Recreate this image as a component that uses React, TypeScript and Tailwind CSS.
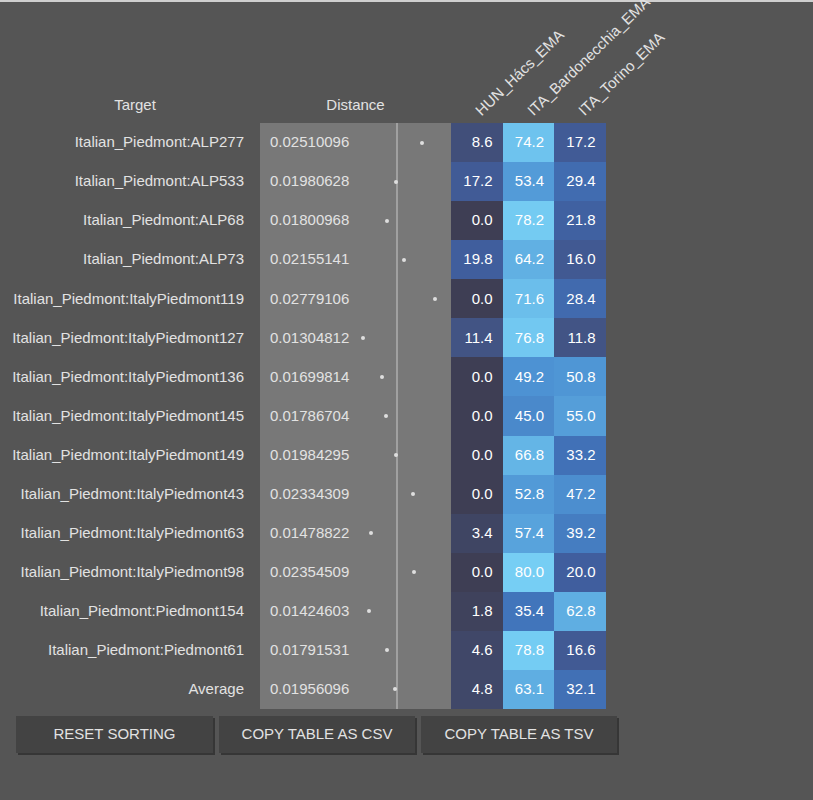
import React from "react";

type Row = { target: string; distance: number; values: [number, number, number] };

const ROWS: Row[] = [
  { target: "Italian_Piedmont:ALP277", distance: 0.02510096, values: [8.6, 74.2, 17.2] },
  { target: "Italian_Piedmont:ALP533", distance: 0.01980628, values: [17.2, 53.4, 29.4] },
  { target: "Italian_Piedmont:ALP68", distance: 0.01800968, values: [0.0, 78.2, 21.8] },
  { target: "Italian_Piedmont:ALP73", distance: 0.02155141, values: [19.8, 64.2, 16.0] },
  { target: "Italian_Piedmont:ItalyPiedmont119", distance: 0.02779106, values: [0.0, 71.6, 28.4] },
  { target: "Italian_Piedmont:ItalyPiedmont127", distance: 0.01304812, values: [11.4, 76.8, 11.8] },
  { target: "Italian_Piedmont:ItalyPiedmont136", distance: 0.01699814, values: [0.0, 49.2, 50.8] },
  { target: "Italian_Piedmont:ItalyPiedmont145", distance: 0.01786704, values: [0.0, 45.0, 55.0] },
  { target: "Italian_Piedmont:ItalyPiedmont149", distance: 0.01984295, values: [0.0, 66.8, 33.2] },
  { target: "Italian_Piedmont:ItalyPiedmont43", distance: 0.02334309, values: [0.0, 52.8, 47.2] },
  { target: "Italian_Piedmont:ItalyPiedmont63", distance: 0.01478822, values: [3.4, 57.4, 39.2] },
  { target: "Italian_Piedmont:ItalyPiedmont98", distance: 0.02354509, values: [0.0, 80.0, 20.0] },
  { target: "Italian_Piedmont:Piedmont154", distance: 0.01424603, values: [1.8, 35.4, 62.8] },
  { target: "Italian_Piedmont:Piedmont61", distance: 0.01791531, values: [4.6, 78.8, 16.6] },
  { target: "Average", distance: 0.01956096, values: [4.8, 63.1, 32.1] },
];

const SOURCES = ["HUN_Hács_EMA", "ITA_Bardonecchia_EMA", "ITA_Torino_EMA"];

const BUTTONS = [
  { label: "RESET SORTING", w: "w-[197px]" },
  { label: "COPY TABLE AS CSV", w: "w-[196px]" },
  { label: "COPY TABLE AS TSV", w: "w-[196px]" },
];

// colour stops for the heat cells (value -> rgb)
const STOPS: [number, number[]][] = [
  [0, [62, 62, 84]],
  [10, [66, 82, 128]],
  [20, [64, 94, 158]],
  [35, [65, 116, 186]],
  [50, [78, 148, 212]],
  [65, [98, 178, 228]],
  [80, [118, 206, 244]],
];

function heat(v: number) {
  for (let i = 1; i < STOPS.length; i++) {
    const [v1, c1] = STOPS[i];
    const [v0, c0] = STOPS[i - 1];
    if (v <= v1 || i === STOPS.length - 1) {
      const t = Math.max(0, Math.min(1, (v - v0) / (v1 - v0)));
      const c = c0.map((a, k) => Math.round(a + (c1[k] - a) * t));
      return `rgb(${c[0]},${c[1]},${c[2]})`;
    }
  }
  return "rgb(62,62,84)";
}

export default function App() {
  return (
    <div
      className="min-h-screen bg-[#555555] border-t-2 border-[#cfcfcf] text-[15px] text-[#e2e2e2]"
      style={{ fontFamily: '"Liberation Sans", Arial, sans-serif' }}
    >
      <div className="pl-[10px]">
        {/* header */}
        <div className="flex h-[121px] items-end">
          <div className="w-[250px] text-center pb-[7px]">Target</div>
          <div className="w-[191px] text-center pb-[7px]">Distance</div>
          {SOURCES.map((s) => (
            <div key={s} className="relative w-[51.5px] h-full">
              <span className="absolute left-[32px] bottom-[5px] origin-bottom-left -rotate-[44deg] whitespace-nowrap leading-none">
                {s}
              </span>
            </div>
          ))}
        </div>

        {/* rows */}
        <div className="flex flex-col">
          {ROWS.map((r) => (
            <div key={r.target} className="flex h-[39.07px] items-center">
              <div className="w-[250px] text-right pr-[16px]">{r.target}</div>
              <div className="relative w-[191px] h-full bg-[#787878] flex items-center pl-[10px]">
                <span>{r.distance.toFixed(8)}</span>
                <div className="absolute left-[136px] top-0 h-full w-[2px] bg-[#a0a0a0]" />
                <div
                  className="absolute top-1/2 w-[4px] h-[4px] -mt-[2px] -ml-[2px] rounded-full bg-[#dedede]"
                  style={{ left: 39 + r.distance * 4895 }}
                />
              </div>
              {r.values.map((v, i) => (
                <div
                  key={i}
                  className="w-[51.5px] h-full flex items-center justify-end pr-[10px] text-white"
                  style={{ backgroundColor: heat(v) }}
                >
                  {v.toFixed(1)}
                </div>
              ))}
            </div>
          ))}
        </div>
      </div>

      {/* buttons */}
      <div className="flex gap-[6px] pl-[16px] mt-[7px]">
        {BUTTONS.map((b) => (
          <button
            key={b.label}
            className={`${b.w} h-[37px] bg-[#434343] text-[#e2e2e2] text-[15px] shadow-[2px_2px_0_#363636]`}
          >
            {b.label}
          </button>
        ))}
      </div>
    </div>
  );
}
